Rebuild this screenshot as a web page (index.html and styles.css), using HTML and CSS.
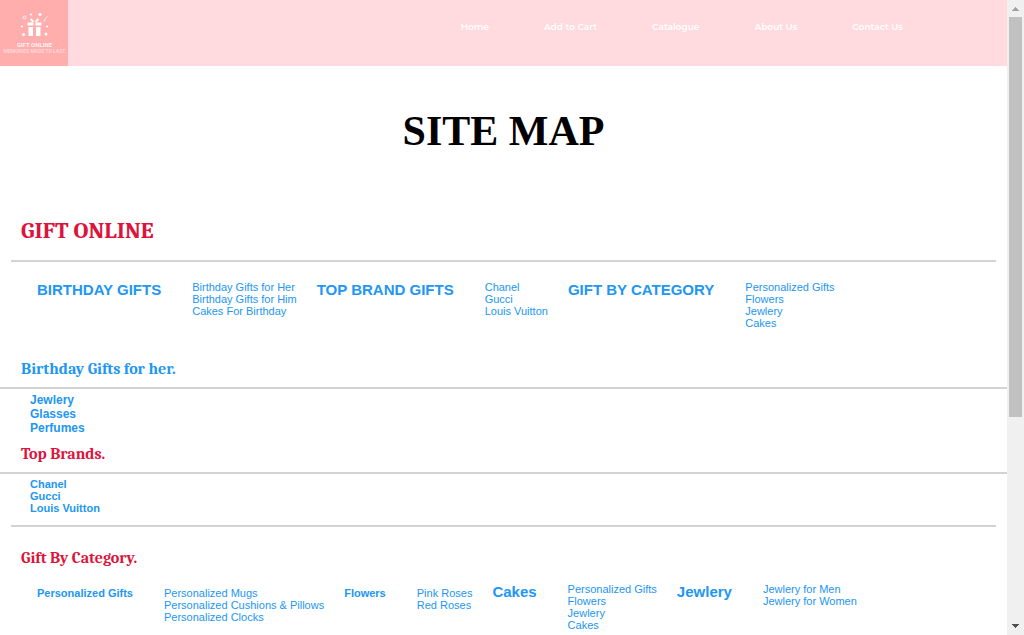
FILE: index.html
```html
<!DOCTYPE html>
<html lang="en">
<head>
<meta charset="utf-8">
<title>Gift Online - Site Map</title>
<link rel="stylesheet" href="styles.css">
</head>
<body>
<div class="page">
  <header class="header">
    <a class="logo" href="#" aria-label="Gift Online home">
      <svg class="logo-art" viewBox="0 0 68 66" aria-hidden="true">
        <g fill="#fff">
          <path d="M27.500 22.500h6v3h-6zM35.500 22.500h6v3h-6zM28.500 27h4.500v9h-4.500zM36 27h4.500v9h-4.500z"/>
          <circle cx="31" cy="14.500" r="1"/><circle cx="40" cy="14.500" r="1.500"/>
          <circle cx="22" cy="26.500" r="1"/><circle cx="47" cy="26.500" r="1"/>
          <circle cx="23.500" cy="34.500" r="1.500"/><circle cx="46" cy="34" r="1.500"/>
        </g>
        <g fill="none" stroke="#fff">
          <circle cx="24.500" cy="17.500" r="1.500" opacity=".8"/>
          <path d="M33.500 22l-3-3M35.500 22l3-3" stroke-width="2"/>
          <path d="M44 21.500l1.500-3 2-2" opacity=".8"/>
        </g>
        <text class="logo-name" x="34.500" y="47" text-anchor="middle">GIFT ONLINE</text>
        <text class="logo-tag" x="34.500" y="53" text-anchor="middle">MEMORIES MADE TO LAST</text>
      </svg>
    </a>
    <nav class="nav">
      <a href="#">Home</a>
      <a href="#">Add to Cart</a>
      <a href="#">Catalogue</a>
      <a href="#">About Us</a>
      <a href="#">Contact Us</a>
    </nav>
  </header>
  <main>
    <h1 class="title">SITE MAP</h1>

    <section class="section-main">
      <h2 class="brand">GIFT ONLINE</h2>
      <hr class="rule inset">
      <div class="groups">
        <div class="group">
          <h3 class="label large"><a href="#">BIRTHDAY GIFTS</a></h3>
          <ul class="links">
            <li><a href="#">Birthday Gifts for Her</a></li>
            <li><a href="#">Birthday Gifts for Him</a></li>
            <li><a href="#">Cakes For Birthday</a></li>
          </ul>
        </div>
        <div class="group">
          <h3 class="label large"><a href="#">TOP BRAND GIFTS</a></h3>
          <ul class="links">
            <li><a href="#">Chanel</a></li>
            <li><a href="#">Gucci</a></li>
            <li><a href="#">Louis Vuitton</a></li>
          </ul>
        </div>
        <div class="group">
          <h3 class="label large"><a href="#">GIFT BY CATEGORY</a></h3>
          <ul class="links">
            <li><a href="#">Personalized Gifts</a></li>
            <li><a href="#">Flowers</a></li>
            <li><a href="#">Jewlery</a></li>
            <li><a href="#">Cakes</a></li>
          </ul>
        </div>
      </div>
    </section>

    <section class="section-her">
      <h2 class="subhead blue"><a href="#">Birthday Gifts for her.</a></h2>
      <hr class="rule">
      <ul class="links stacked medium">
        <li><a href="#">Jewlery</a></li>
        <li><a href="#">Glasses</a></li>
        <li><a href="#">Perfumes</a></li>
      </ul>
    </section>

    <section class="section-brands">
      <h2 class="subhead">Top Brands.</h2>
      <hr class="rule">
      <ul class="links stacked">
        <li><a href="#">Chanel</a></li>
        <li><a href="#">Gucci</a></li>
        <li><a href="#">Louis Vuitton</a></li>
      </ul>
      <hr class="rule inset">
    </section>

    <section class="section-category">
      <h2 class="subhead">Gift By Category.</h2>
      <div class="groups">
        <div class="group">
          <h3 class="label"><a href="#">Personalized Gifts</a></h3>
          <ul class="links">
            <li><a href="#">Personalized Mugs</a></li>
            <li><a href="#">Personalized Cushions &amp; Pillows</a></li>
            <li><a href="#">Personalized Clocks</a></li>
          </ul>
        </div>
        <div class="group">
          <h3 class="label"><a href="#">Flowers</a></h3>
          <ul class="links">
            <li><a href="#">Pink Roses</a></li>
            <li><a href="#">Red Roses</a></li>
          </ul>
        </div>
        <div class="group">
          <h3 class="label large"><a href="#">Cakes</a></h3>
          <ul class="links">
            <li><a href="#">Personalized Gifts</a></li>
            <li><a href="#">Flowers</a></li>
            <li><a href="#">Jewlery</a></li>
            <li><a href="#">Cakes</a></li>
          </ul>
        </div>
        <div class="group">
          <h3 class="label large"><a href="#">Jewlery</a></h3>
          <ul class="links">
            <li><a href="#">Jewlery for Men</a></li>
            <li><a href="#">Jewlery for Women</a></li>
          </ul>
        </div>
      </div>
    </section>
  </main>
</div>
<div class="scrollbar" aria-hidden="true">
  <svg class="arrow" viewBox="0 0 17 17" shape-rendering="crispEdges"><path fill="#a3a3a3" d="M8 7h1v1h1v1h1v1h1v1H5v-1h1V9h1V8h1z"/></svg>
  <div class="track"><div class="thumb"></div></div>
  <svg class="arrow" viewBox="0 0 17 17" shape-rendering="crispEdges"><path fill="#505050" d="M5 6h7v1h-1v1h-1v1H9v1H8V9H7V8H6V7H5z"/></svg>
</div>
</body>
</html>
```
FILE: styles.css
```css
* { box-sizing: border-box; }

body {
  margin: 0;
  display: flex;
  height: 100vh;
  overflow: hidden;
  background: #fff;
  color: #2196f3;
  font-family: Arial, "Liberation Sans", sans-serif;
  font-size: 11px;
  line-height: 12px;
}

h1, h2, h3, ul { margin: 0; padding: 0; }
ul { list-style: none; }
a { color: inherit; text-decoration: none; }

.page { flex: 1; min-width: 0; overflow: hidden; }

.header {
  display: flex;
  justify-content: space-between;
  align-items: flex-start;
  background: #ffdade;
}
.logo { display: block; width: 68px; background: #ffadad; }
.logo-art { display: block; width: 100%; }
.logo-name { font: bold 6px Roboto, sans-serif; fill: #fff; fill-opacity: .85; }
.logo-tag { font: bold 5px Roboto, sans-serif; fill: #fff; fill-opacity: .5; }

.nav {
  display: flex;
  gap: 55px;
  padding: 20px 104px 0 0;
  color: #fff;
  font-family: Montserrat, Lato, sans-serif;
  font-size: 9px;
  font-weight: 600;
  line-height: 14px;
}

.title {
  padding-top: 40px;
  padding-bottom: 60px;
  text-align: center;
  color: #000;
  font: bold 42px/50px "Times New Roman", "Liberation Serif", serif;
}

.brand, .subhead {
  padding-left: 21px;
  color: #dc143c;
  font-family: Cambria, "DejaVu Serif Condensed", "DejaVu Serif", serif;
  font-weight: bold;
}
.brand { font-size: 23px; line-height: 30px; }
.subhead { font-size: 16px; line-height: 18px; }
.blue { color: #2196f3; }

.rule { height: 2px; margin: 0; border: 0; background: #d3d3d3; }
.inset { margin-left: 11px; margin-right: 11px; }

.groups {
  display: flex;
  align-items: baseline;
  gap: 20px;
  padding-left: 37px;
  white-space: nowrap;
}
.group { display: flex; align-items: flex-start; gap: 31px; }
.label { font-size: 11px; line-height: 12px; }
.large { font-size: 15px; line-height: 18px; }

.stacked { padding-left: 30px; font-weight: bold; }
.medium { font-size: 12px; line-height: 14px; }

.section-main .brand { margin-bottom: 14px; }
.section-main .groups { padding-top: 19px; padding-bottom: 31px; }
.section-her .rule, .section-brands .subhead + .rule { margin-top: 9px; margin-bottom: 4px; }
.section-her .stacked { padding-bottom: 10px; }
.section-brands .stacked { padding-bottom: 11px; }
.section-category .subhead { padding-top: 22px; padding-bottom: 16px; }

.scrollbar {
  display: flex;
  flex-direction: column;
  width: 17px;
  background: #f0f0f0;
}
.arrow { display: block; height: 17px; }
.track { flex: 1; padding: 0 2px; }
.thumb { height: 66.6%; background: #c1c1c1; }
```
